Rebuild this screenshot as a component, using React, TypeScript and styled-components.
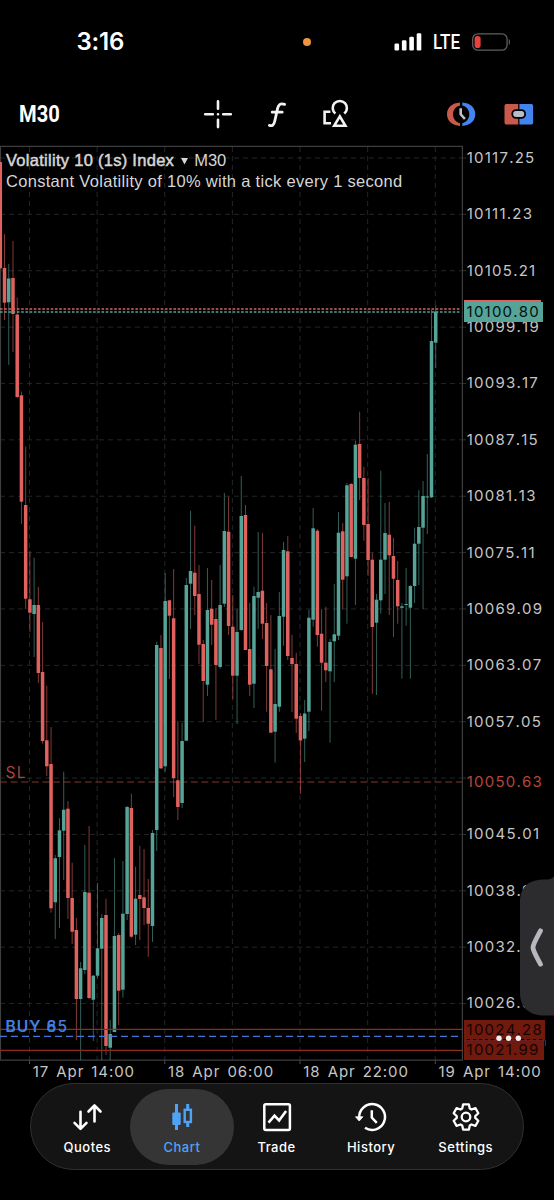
import React from "react";
import styled, { createGlobalStyle } from "styled-components";

const GlobalStyle = createGlobalStyle`
  body { margin: 0; background: #000; }
  * { box-sizing: border-box; }
`;

const RED = "#e0625f";
const GREEN = "#55a497";

const Screen = styled.div`
  width: 554px;
  height: 1200px;
  display: flex;
  flex-direction: column;
  background: #000;
  color: #fff;
  overflow: hidden;
  font-family: Inter, "Liberation Sans", sans-serif;
`;

const StatusBar = styled.header`
  height: 83px;
  flex: none;
  display: flex;
  align-items: center;
  padding: 0 42px 0 76.5px;
`;

const Clock = styled.div`
  width: 226.5px;
  flex: none;
  font-size: 24px;
  font-weight: 600;
  line-height: 28px;
  letter-spacing: -0.2px;
`;

const RecordingDot = styled.div`
  width: 8px;
  height: 8px;
  flex: none;
  border-radius: 50%;
  background: #ef9440;
  margin-right: 83px;
`;

const Squeezed = styled.span<{ $width: number; $scale: number; $size: number; $weight: number }>`
  display: inline-block;
  flex: none;
  width: ${(p) => p.$width}px;
  font-family: Roboto, sans-serif;
  font-size: ${(p) => p.$size}px;
  font-weight: ${(p) => p.$weight};
  line-height: 28px;
  white-space: nowrap;
  transform: scaleX(${(p) => p.$scale});
  transform-origin: left center;
`;

const Signal = styled.svg`
  display: block;
  flex: none;
  margin-right: 11px;
`;

const Battery = styled.svg`
  display: block;
  flex: none;
  margin-left: 11px;
`;

const Toolbar = styled.div`
  height: 63px;
  flex: none;
  display: flex;
  align-items: center;
  padding: 0 20px 1px 19px;
`;

const ToolGroup = styled.div<{ $gap: number; $left: number }>`
  display: flex;
  align-items: center;
  gap: ${(p) => p.$gap}px;
  margin-left: ${(p) => p.$left}px;
`;

const Icon = styled.svg`
  display: block;
  flex: none;
  overflow: visible;
`;

const ChartArea = styled.main`
  position: relative;
  height: 914px;
  flex: none;
  display: flex;
`;

const Plot = styled.div`
  position: relative;
  width: 463px;
  height: 914px;
  flex: none;
`;

const PlotSvg = styled.svg`
  display: block;
  overflow: visible;
`;

const Caption = styled.div`
  position: absolute;
  left: 6px;
  top: 4px;
  font-family: "Liberation Sans", Arial, sans-serif;
  font-size: 16.5px;
  line-height: 21px;
  color: #d6d6d6;
  white-space: nowrap;
`;

const SymbolLine = styled.div`
  display: flex;
  align-items: center;
`;

const SymbolName = styled.span`
  -webkit-text-stroke: 0.5px #d6d6d6;
  letter-spacing: 0.28px;
`;

const Caret = styled.svg`
  margin: 1px 6px 0 7px;
`;

const Description = styled.div`
  letter-spacing: 0.3px;
`;

const LineLabel = styled.div<{ $top: number; $color: string; $weight?: number }>`
  position: absolute;
  left: 5.6px;
  top: ${(p) => p.$top}px;
  color: ${(p) => p.$color};
  font-size: 15.5px;
  font-weight: ${(p) => p.$weight ?? 400};
  line-height: 20px;
  letter-spacing: 1.1px;
  white-space: pre;
`;

const PriceAxis = styled.div`
  width: 91px;
  padding: 2px 0 0 3.8px;
  display: flex;
  flex-direction: column;
`;

const Price = styled.div<{ $stop?: boolean }>`
  height: 56.37px;
  flex: none;
  padding-top: ${(p) => (p.$stop ? 4 : 0)}px;
  color: ${(p) => (p.$stop ? "#b5463d" : "#c6c6c6")};
  font-size: 15px;
  font-kerning: none;
  line-height: 20px;
  letter-spacing: 1.22px;
`;

const PriceTag = styled.div<{ $top: number; $height: number; $width: number; $bg: string; $color: string }>`
  position: absolute;
  left: 464px;
  top: ${(p) => p.$top}px;
  width: ${(p) => p.$width}px;
  height: ${(p) => p.$height}px;
  padding-left: 2.6px;
  background: ${(p) => p.$bg};
  color: ${(p) => p.$color};
  font-size: 15px;
  font-kerning: none;
  line-height: ${(p) => p.$height}px;
  letter-spacing: 1.22px;
`;

const Overlay = styled.svg`
  position: absolute;
  left: 460px;
  top: 720px;
  pointer-events: none;
`;

const TimeAxis = styled.div`
  height: 23px;
  flex: none;
  display: flex;
  padding-left: 32.7px;
`;

const Time = styled.div`
  width: 135.3px;
  flex: none;
  color: #c6c6c6;
  font-size: 15px;
  line-height: 23px;
  letter-spacing: 0.92px;
  word-spacing: 2px;
  white-space: nowrap;
`;

const TabBar = styled.nav`
  width: 494px;
  height: 87px;
  margin: 0 0 0 30px;
  flex: none;
  padding: 5px 5px 5px 9px;
  display: flex;
  border: 1px solid #303030;
  border-radius: 44px;
  background: #141414;
`;

const Tab = styled.div<{ $active?: boolean }>`
  width: ${(p) => (p.$active ? 104 : 94.6)}px;
  height: 76px;
  flex: none;
  margin: 0 ${(p) => (p.$active ? -4.7 : 0)}px;
  display: flex;
  flex-direction: column;
  align-items: center;
  padding-top: 13.5px;
  gap: 6px;
  border-radius: 38px;
  background: ${(p) => (p.$active ? "#353535" : "transparent")};
  color: ${(p) => (p.$active ? "#4ea3f7" : "#fff")};
  font-size: 13px;
  font-weight: 500;
  line-height: 20px;
  letter-spacing: 0.5px;
`;

type Candle = [up: 0 | 1, high: number, top: number, bottom: number, low: number];

/* Each candle: direction, wick top, body top, body bottom, wick bottom. */
const candles: Candle[] = [
  [0, 162, 162, 268.3, 268.3], [0, 234, 268, 302.7, 320], [1, 264, 278.5, 302.3, 365], [0, 241, 278, 314, 352],
  [0, 297.5, 314.5, 397, 398], [0, 391.5, 395.3, 501.7, 524], [0, 446.7, 505, 598.7, 609], [0, 551, 599.3, 612.7, 632],
  [1, 557.7, 605, 614, 657], [0, 587, 605, 673, 683], [0, 622, 672, 741, 743.7], [0, 685.7, 740.3, 766.3, 776],
  [0, 727, 764, 908.3, 912.7], [1, 855, 858.3, 902.3, 939], [1, 818, 830.3, 857, 928], [1, 771.7, 809.7, 830.7, 880],
  [0, 801, 808.7, 898, 919], [0, 862.7, 898, 931.7, 944], [0, 918, 930, 999, 1040], [1, 962, 968.3, 999, 1060],
  [1, 845, 892, 970, 974], [0, 826, 892.7, 998, 999], [1, 975, 975.7, 999.7, 1041], [1, 883, 948.3, 975.7, 978],
  [1, 914, 918, 948.7, 1060], [0, 898.7, 915, 1046, 1055], [1, 1020, 1034, 1047.7, 1060], [1, 858, 936, 1032, 1032],
  [0, 933, 935, 990.7, 1025], [1, 861, 913.7, 989.7, 997.7], [1, 806, 807, 914, 920], [0, 793.7, 808, 936.7, 938],
  [1, 866.7, 898.7, 934.7, 945], [0, 846, 895, 899, 940], [0, 849, 897.3, 908, 925], [0, 879, 908, 923.7, 956.7],
  [1, 830, 833, 926, 942], [1, 641.7, 645, 830, 851], [0, 635, 648, 768.3, 769], [1, 573, 601, 766.3, 771.7],
  [0, 600, 600.3, 615.7, 679], [0, 569, 618.3, 778, 797], [0, 721, 780.3, 807, 820], [1, 723, 741, 803, 808],
  [1, 578, 585, 740.7, 740.7], [1, 510.7, 571, 583.7, 629], [0, 525.7, 572.7, 596, 615], [0, 565, 594, 644.7, 664],
  [0, 640, 644, 681, 722], [1, 568, 610, 684.7, 696], [0, 580, 608.7, 624.7, 645], [0, 608, 619, 665, 720],
  [1, 565, 605, 667, 668.7], [1, 493, 531, 603.7, 607], [0, 496.7, 531.7, 626, 635], [0, 595, 626.7, 675.7, 699],
  [1, 609, 632, 675.7, 724], [1, 476, 516, 630, 631], [0, 505, 515, 650, 650], [0, 603, 649, 684.7, 696],
  [1, 586.7, 596, 683.7, 708], [1, 532, 592, 597.7, 629], [0, 533, 590.7, 623.7, 639], [0, 603, 623, 666, 711.7],
  [0, 615, 669.3, 732.7, 732.7], [1, 649, 704, 731.7, 762.7], [1, 592, 616, 706.7, 711.7], [1, 542, 550, 616.7, 645.7],
  [0, 536, 551.3, 656, 660], [0, 634.7, 658, 664, 712], [0, 652.7, 664, 718.7, 733], [0, 713, 716, 740.5, 794],
  [1, 700, 713.5, 738.7, 762], [1, 610, 617.7, 711.7, 731], [1, 508, 528.3, 619.7, 626.7], [0, 529, 530.7, 635, 646.7],
  [0, 609, 633.7, 662.7, 710.7], [0, 606.7, 662.7, 670.3, 682], [1, 639, 642, 671.3, 742.7], [1, 584, 634.3, 641.3, 682],
  [1, 512, 532.7, 635.7, 640], [0, 523, 531.3, 579.7, 609], [1, 483, 485.3, 576.3, 623.7], [0, 483, 484, 557, 557.5],
  [1, 440.7, 444.7, 558.7, 605], [0, 411.7, 444, 478, 500], [0, 466.7, 478, 525, 540.7], [0, 478, 524, 560, 575.7],
  [0, 553, 559.7, 627, 694], [1, 594, 599.7, 622.7, 695], [1, 470.7, 559.7, 600.3, 613.7], [1, 503, 533, 559.7, 594],
  [0, 502, 534.7, 555.3, 615], [0, 538, 556, 578.7, 637], [0, 561, 580, 606.3, 623.7], [1, 603, 606.3, 607.8, 678.7],
  [1, 568, 604, 605, 625.7], [1, 585, 586, 607.7, 678.7], [1, 527.7, 543.7, 586, 603], [1, 490, 527, 543.7, 585],
  [1, 481, 496, 527.7, 609], [1, 454, 496.5, 497.5, 534], [1, 310, 341, 497.3, 498], [1, 305, 311.7, 342.7, 368],
];

const prices = [
  "10117.25", "10111.23", "10105.21", "10099.19", "10093.17", "10087.15", "10081.13", "10075.11",
  "10069.09", "10063.07", "10057.05", "10050.63", "10045.01", "10038.99", "10032.97", "10026.95",
];

const times = ["17 Apr 14:00", "18 Apr 06:00", "18 Apr 22:00", "19 Apr 14:00"];

const gridX = [0, 1, 2, 3, 4, 5, 6].map((i) => 29.5 + i * 67.63);
const gridY = prices.map((_, i) => 158 + i * 56.37);

function CandleChart() {
  return (
    <PlotSvg width="463" height="914" viewBox="0 146 463 914">
      <g stroke="#222628" strokeWidth="1" strokeDasharray="5 4">
        {gridX.map((x) => <path key={x} d={`M${x} 147V1060`} />)}
        {gridY.map((y) => <path key={y} d={`M0 ${y}H462`} />)}
      </g>
      <g stroke="#2d3032">
        {gridY.map((y) => <path key={y} d={`M462 ${y}h4`} />)}
        {gridX.filter((_, i) => i % 2 === 0).map((x) => <path key={x} d={`M${x} 1060v4`} stroke="#4a4a4a" />)}
      </g>
      <path d="M0.5 1060V146.3H462.4V1060.2H0" fill="none" stroke="#3c3e3f" strokeWidth="1.2" />
      <path d="M0 782H462" stroke="#803630" strokeWidth="1" strokeDasharray="7 3.6" />
      {candles.map(([up, high, top, bottom, low], i) => {
        const x = 0.3 + i * 4.2275;
        const fill = up ? GREEN : RED;
        return (
          <g key={i} fill={fill}>
            <rect x={x - 0.5} y={high} width="1" height={low - high} opacity="0.58" />
            <rect x={Math.max(0, x - 1.75)} y={top} width={Math.min(3.5, x + 1.75)} height={bottom - top} />
          </g>
        );
      })}
      <path d="M0 309H461" stroke="#d0645f" strokeWidth="1.7" strokeDasharray="2.6 1.63" />
      <path d="M0 312.1H461" stroke="#5b9f94" strokeWidth="1.5" strokeDasharray="2.6 1.63" />
      <path d="M0 1029.4H462M0 1050.4H462" stroke="#8e2c1d" strokeWidth="1.1" />
      <path d="M0 1036.4H459" stroke="#3f78d6" strokeWidth="1.2" strokeDasharray="7 4" />
    </PlotSvg>
  );
}

function gearPath() {
  const points: string[] = [];
  for (let i = 0; i < 6; i++) {
    const base = (i * 60 - 90) * (Math.PI / 180);
    const at = (r: number, deg: number) => {
      const a = base + (deg * Math.PI) / 180;
      return `${(14 + r * Math.cos(a)).toFixed(2)} ${(14 + r * Math.sin(a)).toFixed(2)}`;
    };
    points.push(at(9.3, -24), at(12.9, -13), at(12.9, 13), at(9.3, 24));
  }
  return `M${points.join("L")}Z`;
}

export default function App() {
  return (
    <Screen>
      <GlobalStyle />
      <StatusBar>
        <Clock>3:16</Clock>
        <RecordingDot />
        <Signal width="28" height="18" viewBox="0 0 28 18" fill="#fff">
          <rect x="0.5" y="10.5" width="4.6" height="7" rx="1.3" />
          <rect x="7.9" y="7.3" width="4.6" height="10.2" rx="1.3" />
          <rect x="15.3" y="3.7" width="4.6" height="13.8" rx="1.3" />
          <rect x="22.7" y="0.2" width="4.6" height="17.3" rx="1.3" />
        </Signal>
        <Squeezed $width={28} $scale={0.85} $size={20} $weight={500}>LTE</Squeezed>
        <Battery width="40" height="18" viewBox="0 0 40 18">
          <rect x="0.7" y="0.8" width="34.4" height="16.4" rx="5.2" fill="none" stroke="#5c605c" strokeWidth="1.3" />
          <rect x="2.6" y="3" width="6" height="12" rx="2.8" fill="#e8403c" />
          <path d="M36.8 6c1.6.6 1.6 5.4 0 6z" fill="#5c605c" />
        </Battery>
      </StatusBar>

      <Toolbar>
        <Squeezed $width={42} $scale={0.84} $size={24} $weight={700}>M30</Squeezed>
        <ToolGroup $left={142} $gap={33}>
          <Icon width="30" height="30" viewBox="203 99 30 30" stroke="#f2f2f2" strokeWidth="2.6" strokeLinecap="round">
            <path d="M218 101.3v7.4M218 119.7v7.4M205.2 114.2h7.6M223.2 114.2h7.6M218 114.2h.01" />
          </Icon>
          <Icon width="24" height="30" viewBox="266 99 24 30" fill="none" stroke="#f2f2f2" strokeWidth="2.8" strokeLinecap="round">
            <path d="M284.6 104.4c-4-1.7-6.2.4-7 4l-2.8 12.6c-.9 4-2.6 5.3-5.4 4.4M272.2 112.2h10" />
          </Icon>
          <Icon width="30" height="30" viewBox="323 99 30 30" fill="none" stroke="#f2f2f2" strokeWidth="2.6" strokeLinejoin="miter">
            <path d="M335.4 113.6a7.1 7.1 0 1 1 8.8 0" />
            <path d="M330.4 111.7H324.6v11.5h6.4" />
            <path d="M339.8 116.4l-5.6 9.4h11.2z" />
          </Icon>
        </ToolGroup>
        <ToolGroup $left={94} $gap={28}>
          <Icon width="29" height="26" viewBox="447 101.2 29 26" fill="none">
            <path d="M460 102.8C452 103.3 447 108 447 114.5s5 11.2 13 11.7v-2.8c-4-.9-7-4.3-7-8.9s3-8 7-8.9z" fill="#c95a4b" />
            <path d="M462.3 102.8C470.3 103.3 475.3 108 475.3 114.5s-5 11.2-13 11.7v-2.8c4-.9 7-4.3 7-8.9s-3-8-7-8.9z" fill="#4484ee" />
            <path d="M460.7 108.5v6l4.2 4.7" stroke="#bfc3c8" strokeWidth="2.6" />
          </Icon>
          <Icon width="29" height="26" viewBox="504 101.2 29 26">
            <path d="M518.2 104.2h-12a1.7 1.7 0 0 0-1.7 1.7v17a1.7 1.7 0 0 0 1.7 1.7h12z" fill="#c95a4b" />
            <path d="M519.4 104.2h12a1.7 1.7 0 0 1 1.7 1.7v17a1.7 1.7 0 0 1-1.7 1.7h-12z" fill="#4484ee" />
            <rect x="512.3" y="110.3" width="12.8" height="7.8" rx="3.6" fill="#b9bec6" stroke="#000" strokeWidth="1.8" />
          </Icon>
        </ToolGroup>
      </Toolbar>

      <ChartArea>
        <Plot>
          <CandleChart />
          <Caption>
            <SymbolLine>
              <SymbolName>Volatility 10 (1s) Index</SymbolName>
              <Caret width="7" height="8" viewBox="0 0 7 8"><path d="M0 1h7L3.5 7.5z" fill="#d6d6d6" /></Caret>
              <span>M30</span>
            </SymbolLine>
            <Description>Constant Volatility of 10% with a tick every 1 second</Description>
          </Caption>
          <LineLabel $top={616.5} $color="#a8433d">SL</LineLabel>
          <LineLabel $top={871} $color="#3f7fe0" $weight={500}>BUY 65</LineLabel>
          <LineLabel $top={871} $color="#3f7fe0" $weight={500}>BUY 8</LineLabel>
        </Plot>
        <PriceAxis>
          {prices.map((p) => <Price key={p} $stop={p === "10050.63"}>{p}</Price>)}
        </PriceAxis>
        <PriceTag $top={153.7} $height={4} $width={77.3} $bg={RED} $color="#000" />
        <PriceTag $top={156.3} $height={19.7} $width={79} $bg={GREEN} $color="#06110f">10100.80</PriceTag>
        <PriceTag $top={874} $height={19.3} $width={81.3} $bg="#72190e" $color="#160402">10024.28</PriceTag>
        <PriceTag $top={894.3} $height={19.7} $width={80.3} $bg="#72190e" $color="#160402">10021.99</PriceTag>
        <Overlay width="94" height="194" viewBox="460 866 94 194">
          <path d="M464 1039.8h81" stroke="#4b3a72" strokeWidth="1" strokeDasharray="3 3" />
          <path d="M545.3 1040v6" stroke="#24417c" strokeWidth="1" />
          <path d="M554 876.5c-2 2.5-5 3-9 3-15 0-25 6-25 23v90c0 16 10 23 25 23h9z" fill="#2c2b2e" />
          <path d="M540.5 930.8c-2.5 5-7.5 13-7.5 16.7s5 11.7 7.5 16.7" fill="none" stroke="#b9b7bd" strokeWidth="4.8" strokeLinecap="round" />
          <g fill="#f4efee">
            <circle cx="499" cy="1038.3" r="2.7" />
            <circle cx="508.6" cy="1038.3" r="2.7" />
            <circle cx="518.3" cy="1038.3" r="2.7" />
          </g>
        </Overlay>
      </ChartArea>

      <TimeAxis>
        {times.map((t) => <Time key={t}>{t}</Time>)}
      </TimeAxis>

      <TabBar>
        <Tab>
          <Icon width="30" height="28" viewBox="72 1103 30 28" fill="none" stroke="#fff" strokeWidth="2.6" strokeLinecap="round" strokeLinejoin="round">
            <path d="M80.5 1111.8v16.7M74.5 1122.8l6 6 6-6M94.5 1121.5v-16M88.5 1111.5l6-6 6 6" />
          </Icon>
          Quotes
        </Tab>
        <Tab $active>
          <Icon width="28" height="28" viewBox="168 1103 28 28" fill="none" stroke="#4ea3f7">
            <path d="M176.5 1104v26M187.7 1104v5M187.7 1122.5v4.5" strokeWidth="3" />
            <rect x="172.3" y="1112.5" width="8.4" height="12.5" rx="1" fill="#4ea3f7" stroke="none" />
            <rect x="184.7" y="1109.8" width="6.2" height="12.2" strokeWidth="2.4" />
          </Icon>
          Chart
        </Tab>
        <Tab>
          <Icon width="28" height="28" viewBox="263 1103 28 28" fill="none" stroke="#fff" strokeWidth="2.5">
            <rect x="264.3" y="1104.3" width="25.6" height="25.6" rx="1.5" />
            <path d="M268.5 1122.7l6-7 4.6 4.8 7-9.5" strokeWidth="2.6" />
          </Icon>
          Trade
        </Tab>
        <Tab>
          <Icon width="30" height="28" viewBox="356.5 1103 30 28" fill="none" stroke="#fff" strokeWidth="2.5">
            <path d="M359.7 1117.5a12.9 12.9 0 1 1 5.8 10.3" />
            <path d="M356 1116.8h7.4l-3.7 4.2z" fill="#fff" strokeWidth="0.8" />
            <path d="M372.3 1110.3v7.3l5 5.3" />
          </Icon>
          History
        </Tab>
        <Tab>
          <Icon width="28" height="28" viewBox="0 0 28 28" fill="none" stroke="#fff" strokeWidth="2.3" strokeLinejoin="round">
            <path d={gearPath()} />
            <circle cx="14" cy="14" r="4.3" />
          </Icon>
          Settings
        </Tab>
      </TabBar>
    </Screen>
  );
}
